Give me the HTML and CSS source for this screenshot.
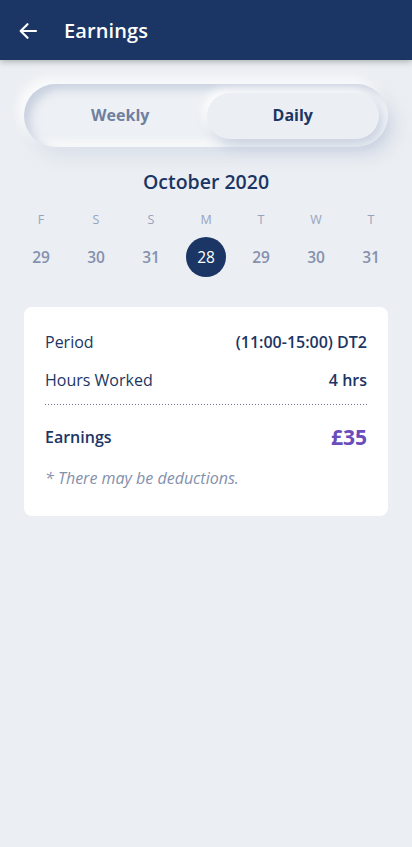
FILE: index.html
```html
<!DOCTYPE html>
<html>
<head>
<meta charset="utf-8">
<link rel="stylesheet" href="styles.css">
</head>
<body>
<header class="appbar">
  <svg class="back" width="20" height="20" viewBox="0 0 20 20"><path d="M18 10H3M9.5 3.2L2.7 10l6.8 6.8" fill="none" stroke="#fff" stroke-width="2.2" stroke-linecap="round" stroke-linejoin="round"/></svg>
  <h1 class="title">Earnings</h1>
</header>
<main class="content">
  <div class="toggle">
    <div class="opt">Weekly</div>
    <div class="opt active">Daily</div>
  </div>
  <h2 class="month">October 2020</h2>
  <div class="days">
    <div class="day"><span class="dl">F</span><span class="dn">29</span></div>
    <div class="day"><span class="dl">S</span><span class="dn">30</span></div>
    <div class="day"><span class="dl">S</span><span class="dn">31</span></div>
    <div class="day"><span class="dl">M</span><span class="dn sel">28</span></div>
    <div class="day"><span class="dl">T</span><span class="dn">29</span></div>
    <div class="day"><span class="dl">W</span><span class="dn">30</span></div>
    <div class="day"><span class="dl">T</span><span class="dn">31</span></div>
  </div>
  <section class="card">
    <div class="row"><span>Period</span><span class="val">(11:00-15:00) DT2</span></div>
    <div class="row"><span>Hours Worked</span><span class="val">4 hrs</span></div>
    <div class="sep"></div>
    <div class="row total"><span>Earnings</span><span class="amount">£35</span></div>
    <p class="note">* There may be deductions.</p>
  </section>
</main>
</body>
</html>
```
FILE: styles.css
```css
* { box-sizing: border-box; }
html, body { margin: 0; padding: 0; }
body {
  width: 412px;
  height: 847px;
  background: #ebeef2;
  font-family: "Open Sans", "Noto Sans", sans-serif;
  color: #1b3565;
  overflow: hidden;
}
.appbar {
  height: 60px;
  background: #1b3565;
  display: flex;
  align-items: center;
  padding-left: 18px;
  gap: 26px;
  box-shadow: 0 2px 6px rgba(0,0,0,0.25);
  position: relative;
  z-index: 2;
}
.back { display: block; margin-top: 1px; }
.title {
  margin: 0;
  color: #fff;
  font-size: 20px;
  font-weight: 600;
  letter-spacing: 0.1px;
}
.content {
  padding: 24px 24px 0;
}
.toggle {
  height: 63px;
  border-radius: 32px;
  background: #edf0f4;
  display: flex;
  align-items: center;
  padding: 0 9px 0 10px;
  box-shadow: inset 6px 5px 10px rgba(170,182,206,0.55), inset -5px -5px 10px rgba(255,255,255,0.9), 8px 10px 16px rgba(190,200,220,0.35), -6px -6px 12px rgba(255,255,255,0.8);
}
.opt {
  flex: 1;
  height: 46px;
  border-radius: 23px;
  display: flex;
  align-items: center;
  justify-content: center;
  font-size: 16px;
  font-weight: 700;
  color: #6f7fa0;
  padding-bottom: 2px;
}
.opt.active {
  background: #ebeef3;
  color: #1b3565;
  box-shadow: 6px 8px 14px rgba(170,182,206,0.55), -4px -4px 10px rgba(255,255,255,0.9);
}
.month {
  margin: 22px 0 0;
  text-align: center;
  font-size: 19.5px;
  font-weight: 600;
  line-height: 26px;
}
.days {
  display: grid;
  grid-template-columns: repeat(7, 55px);
  margin: 17px -10.5px 0;
}
.day {
  display: flex;
  flex-direction: column;
  align-items: center;
}
.dl {
  font-size: 12.5px;
  line-height: 16px;
  color: #97a3bd;
}
.dn {
  margin-top: 9px;
  width: 40px;
  height: 40px;
  border-radius: 50%;
  display: flex;
  align-items: center;
  justify-content: center;
  font-size: 15.5px;
  font-weight: 600;
  color: #8591ae;
}
.dn.sel {
  background: #1b3565;
  color: #fff;
  font-weight: 400;
}
.card {
  margin-top: 30px;
  background: #fff;
  border-radius: 8px;
  padding: 21px 21px 25px;
}
.row {
  display: flex;
  justify-content: space-between;
  align-items: center;
  font-size: 16px;
  line-height: 28px;
  margin-bottom: 10px;
}
.val { font-weight: 600; }
.sep {
  height: 1px;
  background-image: linear-gradient(to right, #6f7890 1px, transparent 1px);
  background-size: 3px 1px;
  background-repeat: repeat-x;
  margin: 7px 0 18px;
}
.total { font-weight: 600; margin-bottom: 14px; }
.amount {
  font-size: 21px;
  font-weight: 700;
  color: #6a4cbc;
}
.note {
  margin: 0;
  font-size: 16px;
  font-style: italic;
  color: #8490ac;
  line-height: 26px;
}
```
